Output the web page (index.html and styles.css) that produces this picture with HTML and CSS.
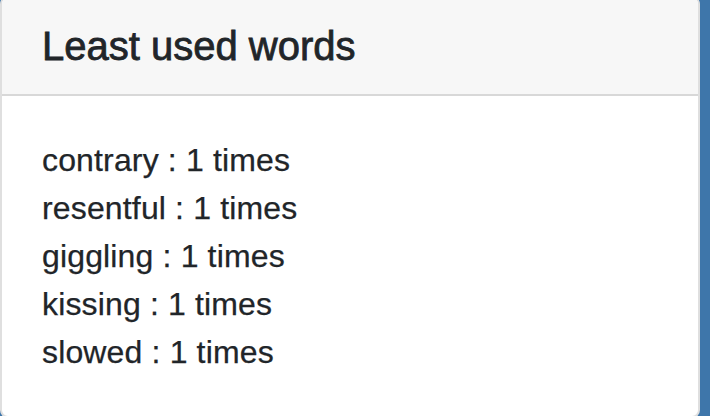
FILE: index.html
```html
<!DOCTYPE html>
<html lang="en">
<head>
<meta charset="utf-8">
<title>Least used words</title>
<link rel="stylesheet" href="styles.css">
</head>
<body>
<div class="card">
  <div class="card-header">
    <h5 class="card-title">Least used words</h5>
  </div>
  <div class="card-body">
    <ul class="word-list">
      <li>contrary : 1 times</li>
      <li>resentful : 1 times</li>
      <li>giggling : 1 times</li>
      <li>kissing : 1 times</li>
      <li>slowed : 1 times</li>
    </ul>
  </div>
</div>
</body>
</html>
```
FILE: styles.css
```css
html, body {
  margin: 0;
  padding: 0;
}
body {
  background: #3e76aa;
  font-family: "Liberation Sans", Arial, sans-serif;
  color: #212529;
  width: 710px;
  height: 416px;
  overflow: hidden;
}
.card {
  width: 700px;
  box-sizing: border-box;
  margin-top: -4px;
  background: #fff;
  border: 2px solid rgba(0, 0, 0, 0.125);
  border-radius: 8px;
}
.card-header {
  background: #f7f7f7;
  padding: 24px 40px;
  border-bottom: 2px solid rgba(0, 0, 0, 0.125);
  border-radius: 6px 6px 0 0;
}
.card-title {
  margin: 0;
  font-size: 40px;
  font-weight: 500;
  line-height: 48px;
  -webkit-text-stroke: 0.8px #212529;
}
.card-body {
  padding: 40px 40px;
}
.word-list {
  list-style: none;
  margin: 0;
  padding: 0;
  font-size: 32px;
  line-height: 48px;
  letter-spacing: 0.15px;
  -webkit-text-stroke: 0.25px #212529;
}
```
